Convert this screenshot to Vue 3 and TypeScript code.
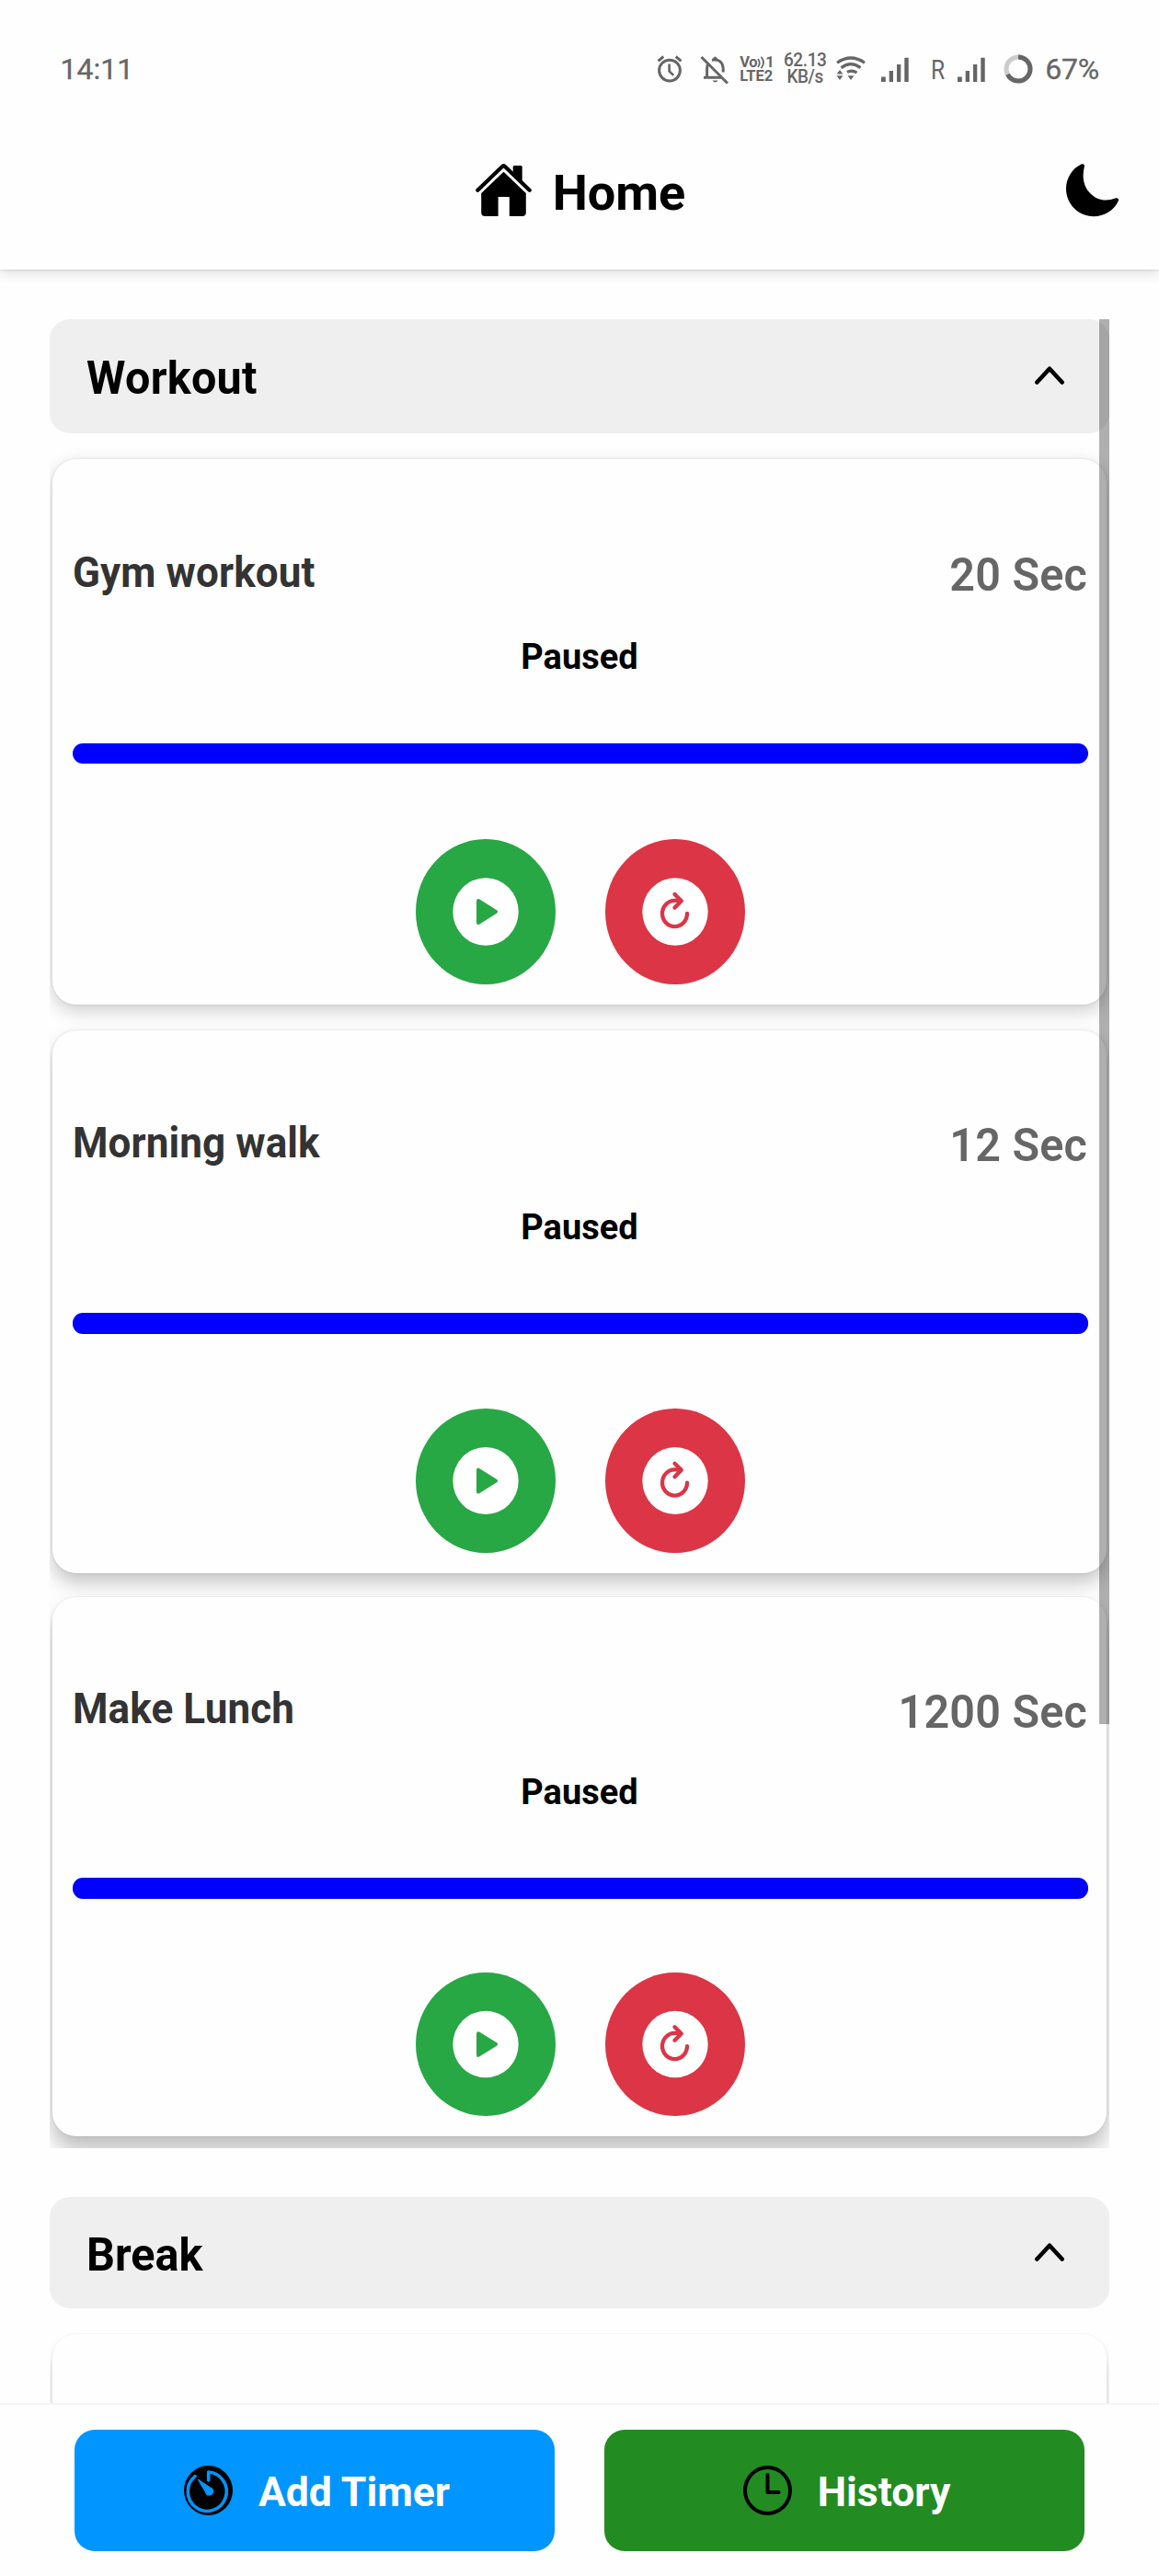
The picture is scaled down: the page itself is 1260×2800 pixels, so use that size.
<script setup lang="ts">
interface Timer {
  name: string
  seconds: number
  status: string
  /** vertical factor from the scroll stretch */
  stretch: number
  gap: number
}

const timers: Timer[] = [
  { name: 'Gym workout', seconds: 20, status: 'Paused', stretch: 1, gap: 28.6 },
  { name: 'Morning walk', seconds: 12, status: 'Paused', stretch: 0.995, gap: 27.7 },
  { name: 'Make Lunch', seconds: 1200, status: 'Paused', stretch: 0.988, gap: 26 },
]
</script>

<template>
  <div class="screen">
    <div class="status">
      <span class="clock">14:11</span>
      <div class="indicators">
        <svg class="i-alarm" width="28" height="30" viewBox="0 0 28 30" fill="none" stroke="#666" stroke-width="3">
          <circle cx="14" cy="16.6" r="11.4" />
          <path d="M13.6 9.5v8l4.6 4.4" stroke-width="2.6" />
          <path d="M1.5 6.3 7.3 1.5M26.5 6.3 20.7 1.5" />
        </svg>
        <svg class="i-bell" width="31" height="31" viewBox="0 0 31 31" fill="none" stroke="#666">
          <path d="M1.5 2 30 30.5" stroke-width="3" />
          <path d="M4 24.3H23M7.6 24V14.5Q7.6 11 9.5 8.7M13 5.2Q24.8 3.5 25.2 15V18.5" stroke-width="3" />
          <path d="M13.5 4.5Q16.5 -1.5 19.5 4.5ZM13.5 27.5H19.5Q16.5 31.5 13.5 27.5Z" fill="#666" stroke="none" />
        </svg>
        <div class="volte">
          <span class="vo">Vo<svg width="9" height="14" viewBox="0 0 9 14" fill="none" stroke="#666" stroke-width="1.8"><path d="M1 3Q4.5 7.5 1 12M4.5 .8Q9.5 7 4.5 13.2" /></svg>1</span>
          <span>LTE2</span>
        </div>
        <div class="speed"><span>62.13</span><span>KB/s</span></div>
        <svg class="i-wifi" width="32" height="28" viewBox="0 0 32 28" fill="none" stroke="#666" stroke-width="3.2">
          <path d="M1 7.2Q16 -3.2 31 7.2M5.5 12.6Q16 4.8 26.5 12.6M12 17.4Q17 14.5 22.5 18" />
          <path d="M0.5 19.5 4 15 7.5 19.5ZM0.5 21.2H7.5L4 26ZM12.5 21.2H19.5L16 26Z" fill="#666" stroke="none" />
        </svg>
        <svg class="i-sig" width="30" height="27" viewBox="0 0 30 27" fill="#666">
          <path d="M0 21.5h4.8V27H0zM8.7 15h4.3v12H8.7zM17 8h4.3v19H17zM25.3 .8h4.4V27h-4.4z" />
        </svg>
        <span class="roam">R</span>
        <svg class="i-sig2" width="30" height="27" viewBox="0 0 30 27" fill="#666">
          <path d="M0 21.5h4.8V27H0zM8.7 15h4.3v12H8.7zM17 8h4.3v19H17zM25.3 .8h4.4V27h-4.4z" />
        </svg>
        <svg class="i-ring" width="32" height="32" viewBox="0 0 32 32" fill="none" stroke-width="5">
          <circle cx="16" cy="16" r="13" stroke="#ccc" />
          <circle cx="16" cy="16" r="13" stroke="#666" stroke-dasharray="54.7 100" transform="rotate(-90 16 16)" />
        </svg>
        <span class="battery">67%</span>
      </div>
    </div>

    <header class="appbar">
      <div class="title">
        <svg width="61" height="58" viewBox="0 0 61 58">
          <path d="M40.7 3.5Q40.7 2 42.2 2H49.2Q50.7 2 50.7 3.5V20L40.7 9Z" />
          <path d="M2.3 28.8 28.8 3.2Q30.5 1.5 32.2 3.2L58.7 28.8" fill="none" stroke="#000" stroke-width="4.2" stroke-linecap="round" />
          <path d="M30.5 8.7 54.8 32V53Q54.8 57 50.8 57H36.8V36H24.6V57H10.2Q6.2 57 6.2 53V32Z" />
        </svg>
        <h1>Home</h1>
      </div>
      <svg class="moon" width="58" height="58" viewBox="0 0 58 58">
        <path d="M16.5 .6C18.5 -.5 20.4 .8 19.9 3C18.8 7 18.5 11 18.7 15C19.5 29 31 39.5 43 39.5C47 39.5 50 38.8 53.5 37.5C56 36.8 57.5 38.3 56.8 40.5C52 51 41 57.2 30 57.2C13 57.2 0 43.5 0 27C0 15.5 7 5 16.5 .6Z" />
      </svg>
    </header>

    <main class="content">
      <section class="group first">
        <div class="group-head">
          <h2>Workout</h2>
          <svg width="32" height="20" viewBox="0 0 32 20" fill="none" stroke="#000" stroke-width="4.6" stroke-linecap="round" stroke-linejoin="round">
            <path d="M2.4 17.5 16 2.8 29.6 17.5" />
          </svg>
        </div>
        <article
          v-for="(t, i) in timers"
          :key="t.name"
          :class="['card', `depth-${i + 1}`]"
          :style="{ '--k': t.stretch, marginTop: `${t.gap}px` }"
        >
          <div class="row">
            <span class="name">{{ t.name }}</span>
            <span class="time">{{ t.seconds }} Sec</span>
          </div>
          <div class="state">{{ t.status }}</div>
          <div class="bar"></div>
          <div class="actions">
            <button class="round play">
              <svg viewBox="0 0 152 158" preserveAspectRatio="none">
                <ellipse cx="76" cy="79" rx="35.7" ry="36.7" fill="#fff" />
                <path d="M66 67.5Q66 64 69 65.3L88 77.3Q90.3 79 88 80.7L69 92.7Q66 94 66 90.5Z" fill="#28a745" />
              </svg>
            </button>
            <button class="round reset">
              <svg viewBox="0 0 152 158" preserveAspectRatio="none">
                <ellipse cx="76" cy="79" rx="35.7" ry="36.7" fill="#fff" />
                <path d="M89 81A13.5 14.2 0 1 1 75.5 66.8H82M75.5 60 82.8 67.2 75.5 74.6" fill="none" stroke="#dc3545" stroke-width="4.3" stroke-linecap="round" stroke-linejoin="round" />
              </svg>
            </button>
          </div>
        </article>
        <div class="scrollbar"></div>
      </section>

      <section class="group second">
        <div class="group-head">
          <h2>Break</h2>
          <svg width="32" height="20" viewBox="0 0 32 20" fill="none" stroke="#000" stroke-width="4.6" stroke-linecap="round" stroke-linejoin="round">
            <path d="M2.4 17.5 16 2.8 29.6 17.5" />
          </svg>
        </div>
        <article class="card next"></article>
      </section>
    </main>

    <footer class="actionsbar">
      <button class="cta add">
        <svg width="53" height="54" viewBox="0 0 53 54">
          <ellipse cx="26.5" cy="27" rx="26.5" ry="27" />
          <path d="M12 11.7A21 21.2 0 1 0 26.7 7V16" fill="none" stroke="#0095ff" stroke-width="3.6" stroke-linecap="round" stroke-linejoin="round" />
          <path d="M15.2 15.8Q14.5 14.3 16.2 15L28.8 23.6A4.6 4.6 0 1 1 23 29Z" fill="#0095ff" />
        </svg>
        <span>Add Timer</span>
      </button>
      <button class="cta history">
        <svg width="53" height="54" viewBox="0 0 53 54" fill="none" stroke="#000" stroke-width="4" stroke-linecap="round" stroke-linejoin="round">
          <ellipse cx="26.5" cy="27" rx="24.5" ry="25" />
          <path d="M26.5 10V29H38.5" />
        </svg>
        <span>History</span>
      </button>
    </footer>
  </div>
</template>

<style>
body {
  background: #fff;
}
</style>

<style scoped>
.screen {
  width: 1260px;
  height: 2800px;
  overflow: hidden;
  display: flex;
  flex-direction: column;
  background: #fefefe;
  font-family: Roboto, "Liberation Sans", sans-serif;
  color: #000;
}
h1, h2 { margin: 0; font-weight: 700; }
svg { display: block; flex: none; }
button { border: 0; padding: 0; font-family: inherit; }

.status {
  height: 150px;
  flex: none;
  box-sizing: border-box;
  padding: 0 65px 0 65.5px;
  display: flex;
  align-items: center;
  justify-content: space-between;
  color: #666;
  font-size: 32px;
}
.clock { -webkit-text-stroke: 0.3px #666; }
.battery { letter-spacing: -0.2px; -webkit-text-stroke: 0.3px #666; }
.indicators { display: flex; align-items: center; }
.i-bell { margin-left: 19px; }
.volte {
  margin-left: 12px;
  width: 37px;
  font-size: 16.5px;
  font-weight: 700;
  line-height: 15px;
  display: flex;
  flex-direction: column;
  white-space: nowrap;
}
.vo { display: flex; align-items: center; letter-spacing: -0.3px; }
.speed {
  margin-left: 11px;
  width: 46px;
  font-size: 19px;
  font-weight: 500;
  line-height: 18.5px;
  display: flex;
  flex-direction: column;
  align-items: center;
  letter-spacing: -0.4px;
}
.speed span { transform: scaleY(1.04); }
.i-wifi { margin-left: 11px; }
.i-sig { margin-left: 17px; }
.roam {
  font-size: 30px;
  width: 18px;
  margin-left: 24px;
  transform: scaleX(0.82);
  transform-origin: left;
}
.i-sig2 { margin-left: 11px; }
.i-ring { margin-left: 20px; margin-right: 13px; }

.appbar {
  height: 143px;
  flex: none;
  box-sizing: border-box;
  padding-bottom: 30px;
  display: grid;
  grid-template-columns: 1fr auto 1fr;
  align-items: center;
  background: #fefefe;
  box-shadow: 0 1px 2px rgba(0, 0, 0, 0.1), 0 5px 12px rgba(0, 0, 0, 0.11);
  clip-path: inset(0 0 -40px 0);
  z-index: 2;
}
.title {
  grid-column: 2;
  display: flex;
  align-items: center;
  gap: 23px;
  padding-left: 2px;
}
.title h1 { font-size: 54px; line-height: 56px; padding-top: 6px; }
.moon { justify-self: end; margin-right: 43px; }

.content {
  height: 2319px;
  flex: none;
  box-sizing: border-box;
  padding: 54px 54px 0;
  overflow: hidden;
}
.group { position: relative; overflow: hidden; }
.first { height: 1987.7px; }
.second { margin-top: 53.6px; height: 300px; }
.group-head {
  height: 123.7px;
  box-sizing: border-box;
  padding: 0 49.5px 0 40px;
  border-radius: 22px;
  background: #efefef;
  display: flex;
  align-items: center;
  justify-content: space-between;
}
.group-head h2 {
  font-size: 48.5px;
  line-height: 56px;
  padding-top: 5px;
  letter-spacing: 0.3px;
  transform: scaleY(1.045);
}
.second .group-head h2 { letter-spacing: 0; }
.group-head svg { margin-top: -1px; }
.second .group-head { height: 121px; }

.card {
  --k: 1;
  height: calc(593px * var(--k));
  margin: 0 3px;
  box-sizing: border-box;
  padding: calc(96px * var(--k)) 20px 0 22px;
  background: #fefefe;
  border-radius: 26px;
}
.depth-1 { box-shadow: 0 0 3px rgba(0, 0, 0, 0.13), 0 7px 20px rgba(0, 0, 0, 0.19); }
.depth-2 { box-shadow: 0 0 3px rgba(0, 0, 0, 0.12), 0 11px 20px rgba(0, 0, 0, 0.22); }
.depth-3 { box-shadow: 0 0 3px rgba(0, 0, 0, 0.1), 0 15px 22px rgba(0, 0, 0, 0.25); }
.card.next {
  margin-top: 27.5px;
  box-shadow: 0 0 3px rgba(0, 0, 0, 0.08), 0 18px 20px rgba(0, 0, 0, 0.17);
}
.row {
  height: calc(60px * var(--k));
  display: flex;
  justify-content: space-between;
  align-items: flex-start;
}
.name, .time, .state { transform: scaleY(calc(1.045 * var(--k))); }
.name {
  font-size: 44px;
  font-weight: 700;
  line-height: 54px;
  letter-spacing: 0.1px;
  color: #333;
}
.time {
  font-size: 48.5px;
  font-weight: 600;
  line-height: 60px;
  letter-spacing: 0.2px;
  color: #666;
  padding-right: 1px;
}
.state {
  margin-top: calc(36px * var(--k));
  padding-right: 2px;
  font-size: 38px;
  font-weight: 700;
  line-height: 44px;
  text-align: center;
}
.bar {
  margin-top: calc(72.4px * var(--k));
  height: calc(22.6px * var(--k));
  border-radius: 11px;
  background: #00f;
}
.actions {
  margin-top: calc(81.7px * var(--k));
  display: flex;
  justify-content: center;
  gap: 54px;
}
.round {
  width: 152px;
  height: calc(158px * var(--k));
  border-radius: 50%;
}
.round svg { width: 100%; height: 100%; }
.play { background: #28a745; }
.reset { background: #dc3545; }

.scrollbar {
  position: absolute;
  top: 0;
  right: 0;
  width: 11px;
  height: 1527px;
  background: rgba(0, 0, 0, 0.31);
}

.actionsbar {
  height: 188px;
  flex: none;
  box-sizing: border-box;
  border-top: 2px solid #f5f5f5;
  padding: 26.7px 81px 27px;
  display: flex;
  gap: 54px;
  background: #fefefe;
}
.cta {
  flex: 1;
  border-radius: 22px;
  display: flex;
  align-items: center;
  justify-content: center;
  gap: 28px;
  color: #fff;
  font-size: 44.5px;
  font-weight: 700;
  padding-left: 5px;
}
.cta span { padding-top: 4px; }
.add { background: #0095ff; }
.history { background: #228b22; }
</style>
